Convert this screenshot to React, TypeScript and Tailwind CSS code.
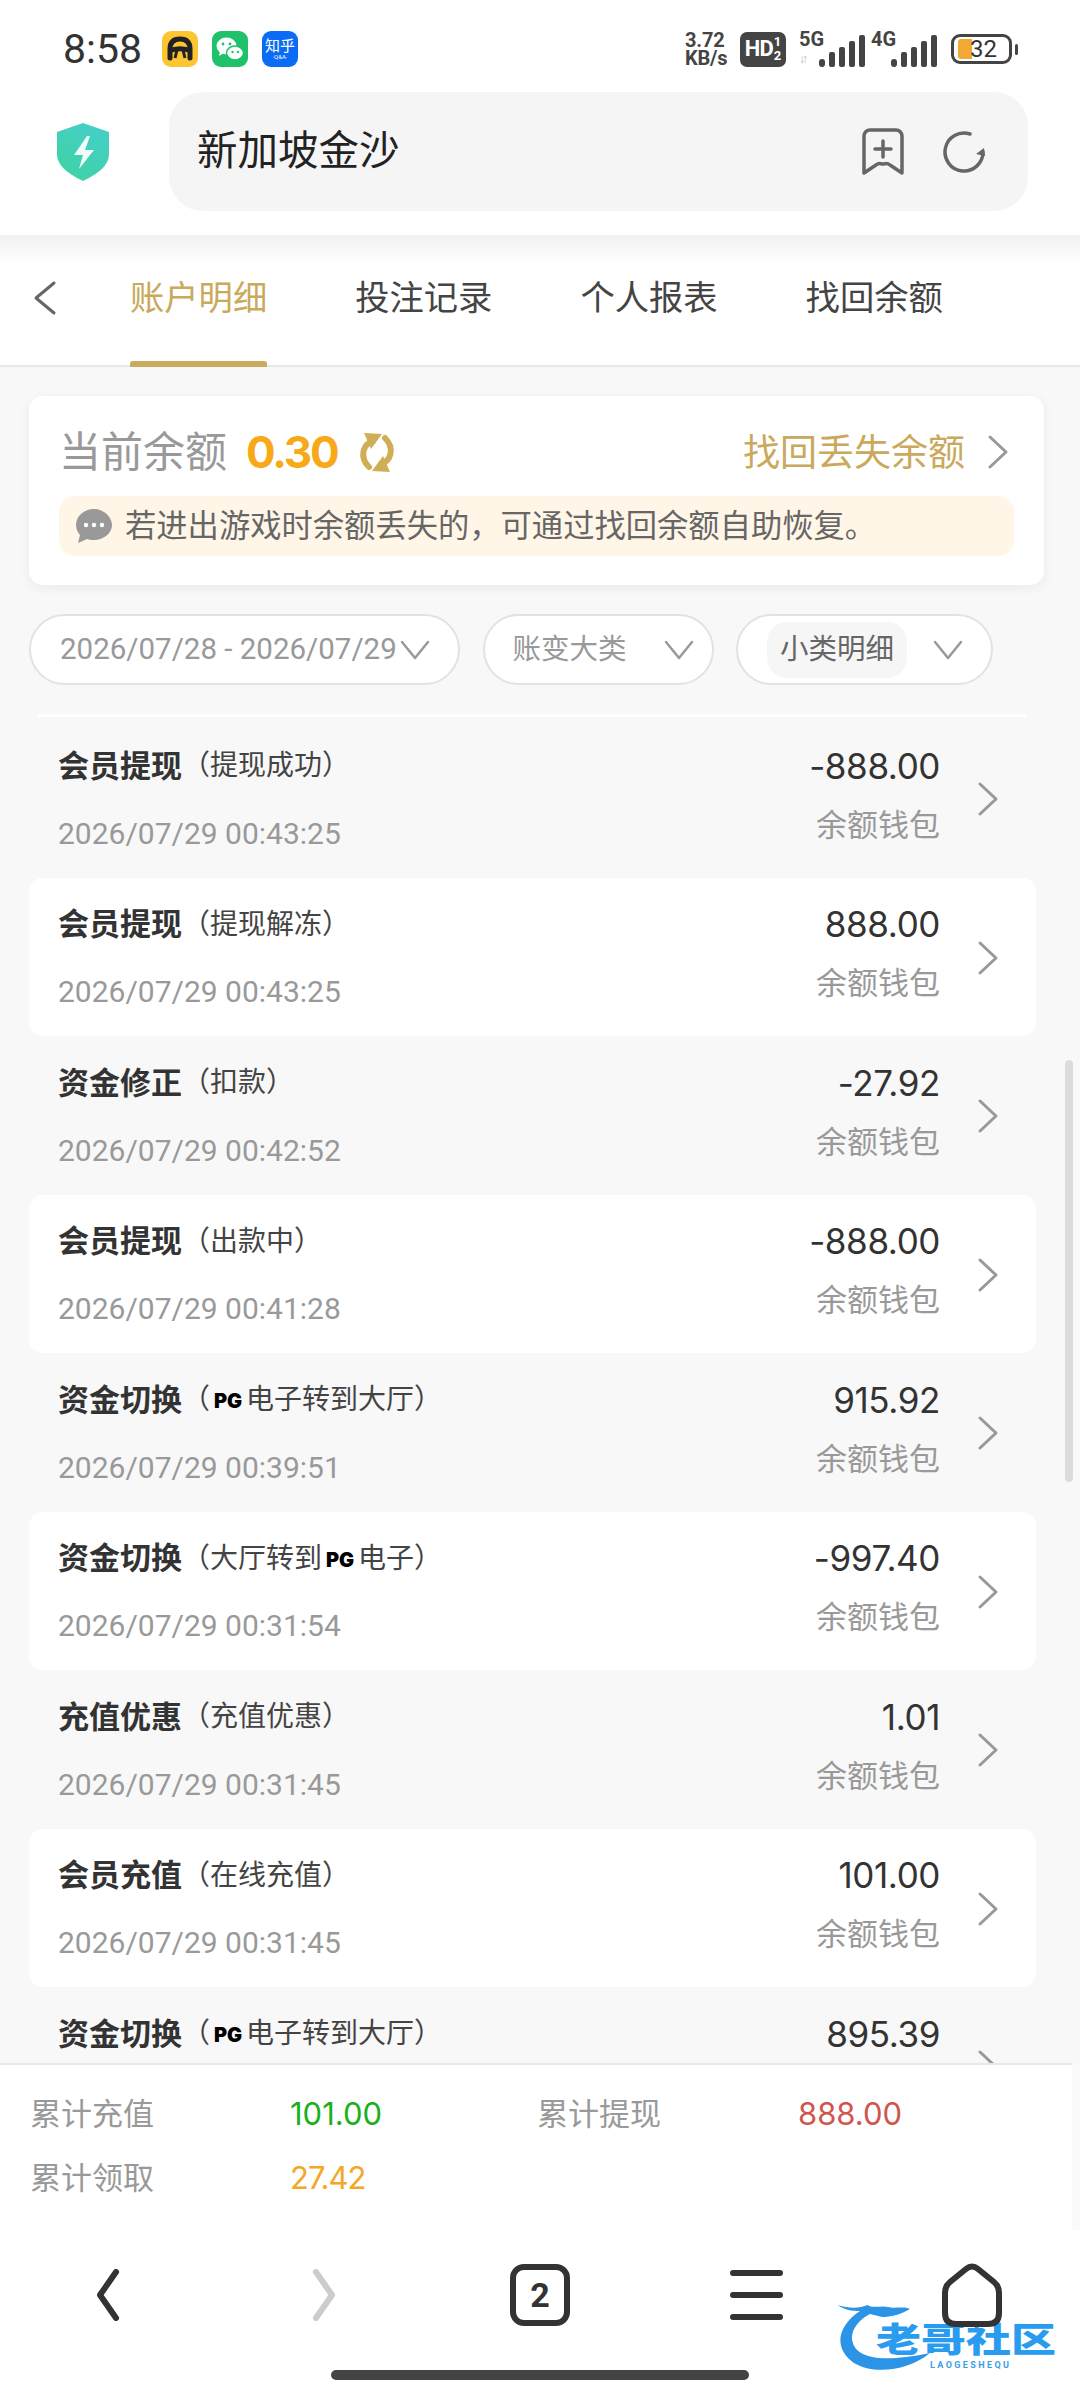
import React from "react";

const rows = [
  { t: "会员提现", s: <>（提现成功）</>, d: "2026/07/29 00:43:25", a: "-888.00" },
  { t: "会员提现", s: <>（提现解冻）</>, d: "2026/07/29 00:43:25", a: "888.00" },
  { t: "资金修正", s: <>（扣款）</>, d: "2026/07/29 00:42:52", a: "-27.92" },
  { t: "会员提现", s: <>（出款中）</>, d: "2026/07/29 00:41:28", a: "-888.00" },
  { t: "资金切换", s: <>（<PG />电子转到大厅）</>, d: "2026/07/29 00:39:51", a: "915.92" },
  { t: "资金切换", s: <>（大厅转到<PG />电子）</>, d: "2026/07/29 00:31:54", a: "-997.40" },
  { t: "充值优惠", s: <>（充值优惠）</>, d: "2026/07/29 00:31:45", a: "1.01" },
  { t: "会员充值", s: <>（在线充值）</>, d: "2026/07/29 00:31:45", a: "101.00" },
  { t: "资金切换", s: <>（<PG />电子转到大厅）</>, d: "", a: "895.39" },
];

function PG() {
  return <span className="inline-block w-[36px] text-center text-[20px] font-black tracking-[0px] text-black align-[1px]">PG</span>;
}

function Chevron({ className, w = 21, h = 34, sw = 3 }: { className?: string; w?: number; h?: number; sw?: number }) {
  return (
    <svg width={w} height={h} viewBox={`0 0 ${w} ${h}`} fill="none" className={className}>
      <path d={`M${sw} ${sw}L${w - sw} ${h / 2}L${sw} ${h - sw}`} stroke="currentColor" strokeWidth={sw} strokeLinecap="round" strokeLinejoin="round" />
    </svg>
  );
}

function Down() {
  return (
    <svg width="30" height="20" viewBox="0 0 30 20" fill="none" className="text-[#999] shrink-0">
      <path d="M2 2L15 18L28 2" stroke="currentColor" strokeWidth="2.5" strokeLinecap="round" strokeLinejoin="round" />
    </svg>
  );
}

function Signal() {
  return (
    <svg width="46" height="32" viewBox="0 0 46 32" fill="#444">
      <rect x="0" y="24" width="6" height="8" rx="3" />
      <rect x="10" y="17" width="6" height="15" rx="2" />
      <rect x="20" y="12" width="6" height="20" rx="2" />
      <rect x="30" y="6" width="6" height="26" rx="2" />
      <rect x="40" y="0" width="6" height="32" rx="2" />
    </svg>
  );
}

function StatusBar() {
  return (
    <div className="h-[92px] shrink-0 flex items-center pl-[63px] pr-[62px] pt-[6px] bg-white">
      <span className="text-[41px] leading-none text-[#333] font-[Roboto,sans-serif] w-[99px]">8:58</span>
      <div className="flex gap-[14px]">
        <div className="w-[36px] h-[36px] rounded-[9px] bg-[#fdc532] flex items-center justify-center">
          <svg width="30" height="30" viewBox="0 0 30 30" fill="none">
            <path d="M5 24V15C5 8 9 5 15 5s10 3 10 10v9" stroke="#222" strokeWidth="5" strokeLinecap="round" />
            <path d="M4 17c6-3 16-3 22 0" stroke="#222" strokeWidth="5" />
            <path d="M12 16l-2 8M18 16l2 8" stroke="#222" strokeWidth="3" />
          </svg>
        </div>
        <div className="w-[36px] h-[36px] rounded-[9px] bg-[#1fc26b] flex items-center justify-center">
          <svg width="30" height="28" viewBox="0 0 30 28" fill="#fff">
            <ellipse cx="11.5" cy="11" rx="10" ry="8.5" />
            <path d="M5 16l-1 5 5-3z" />
            <ellipse cx="20" cy="18" rx="8.5" ry="7" stroke="#1fc26b" strokeWidth="1.5" />
            <circle cx="8" cy="9" r="1.4" fill="#1fc26b" />
            <circle cx="15" cy="9" r="1.4" fill="#1fc26b" />
            <circle cx="17.5" cy="17" r="1.2" fill="#1fc26b" />
            <circle cx="23" cy="17" r="1.2" fill="#1fc26b" />
          </svg>
        </div>
        <div className="w-[36px] h-[36px] rounded-[9px] bg-[#0a6cf5] flex flex-col items-center justify-center text-white">
          <span className="text-[15px] leading-[16px] font-['Noto_Sans_CJK_SC',sans-serif]">知乎</span>
          <span className="text-[6px] leading-[8px] font-[Roboto,sans-serif]">·Q&amp;A·</span>
        </div>
      </div>
      <div className="ml-auto flex items-center text-[#444] font-[Roboto,sans-serif]">
        <div className="flex flex-col items-start text-[20px] leading-[18px] font-bold tracking-[-0.2px] w-[52px]">
          <span>3.72</span>
          <span>KB/s</span>
        </div>
        <div className="ml-[3px] w-[46px] h-[35px] rounded-[7px] bg-[#444] text-white flex items-center justify-center font-bold">
          <span className="text-[22px] leading-none tracking-[-1px]">HD</span>
          <span className="flex flex-col text-[13px] leading-[14px] ml-[1px]"><span>1</span><span>2</span></span>
        </div>
        <div className="ml-[13px] relative w-[66px] h-[36px]">
          <span className="absolute left-0 top-[-3px] text-[20px] font-bold leading-[22px]">5G</span>
          <span className="absolute left-0 bottom-[1px] text-[12px] font-bold leading-[13px] text-[#bbb] tracking-[-3px]">↓↑</span>
          <div className="absolute right-0 bottom-0"><Signal /></div>
        </div>
        <div className="ml-[6px] relative w-[66px] h-[36px]">
          <span className="absolute left-0 top-[-3px] text-[20px] font-bold leading-[22px]">4G</span>
          <div className="absolute right-0 bottom-0"><Signal /></div>
        </div>
        <div className="ml-[14px] w-[61px] h-[30px] rounded-[9px] border-[3px] border-[#444] flex items-center pl-[4px] relative">
          <div className="w-[14px] h-[20px] bg-[#f2a933] rounded-l-[3px]" />
          <span className="absolute left-[16px] top-[2px] text-[24px] leading-[20px] font-normal text-[#333]">32</span>
        </div>
        <div className="ml-[3px] w-[3px] h-[11px] rounded-full bg-[#444]" />
      </div>
    </div>
  );
}

function AddressBar() {
  return (
    <div className="h-[143px] shrink-0 bg-white flex items-start pr-[52px] relative z-10">
      <div className="w-[169px] h-[119px] flex items-center justify-center pr-[4px]">
        <svg width="52" height="58" viewBox="0 0 52 58">
          <defs>
            <linearGradient id="sh" x1="0.8" y1="0" x2="0.3" y2="1">
              <stop offset="0" stopColor="#45cfc8" />
              <stop offset="1" stopColor="#3fd2a6" />
            </linearGradient>
          </defs>
          <path d="M26 0L52 9V31C52 44 38 52 26 58C14 52 0 44 0 31V9Z" fill="url(#sh)" />
          <path d="M30 13L17 32H26L22 46L37 27H28L33 13Z" fill="#fff" opacity="0.92" />
        </svg>
      </div>
      <div className="flex-1 h-[119px] rounded-[34px] bg-[#f5f5f5] flex items-center pl-[28px] pr-[41px]">
        <span className="text-[40.5px] text-[#222]">新加坡金沙</span>
        <div className="ml-auto flex items-center gap-[39px]">
          <svg width="42" height="48" viewBox="0 0 42 48" fill="none" stroke="#666" strokeWidth="3.5" strokeLinecap="round" strokeLinejoin="round">
            <path d="M2 8a6 6 0 0 1 6-6h26a6 6 0 0 1 6 6v37l-12-8a6 6 0 0 0-6-1h-2a6 6 0 0 0-6 1L2 45Z" />
            <path d="M21 13v16M13 21h16" />
          </svg>
          <svg width="44" height="44" viewBox="0 0 44 44" fill="none">
            <path d="M40 22A19 19 0 1 1 27 4" stroke="#666" strokeWidth="3.5" strokeLinecap="round" />
            <path d="M41 18l1 8-9-2z" fill="#666" />
          </svg>
        </div>
      </div>
    </div>
  );
}

function Tabs() {
  return (
    <div className="h-[132px] shrink-0 bg-gradient-to-b from-[#f1f1f1] to-[#ffffff] to-[22%] border-b-2 border-[#e8e8e8] flex relative">
      <div className="w-[130px] flex items-center pl-[33px] pb-[5px] text-[#666]">
        <Chevron className="rotate-180" w={24} h={36} sw={3} />
      </div>
      <div className="flex gap-[88px] text-[34.3px] text-[#444]">
        <div className="relative flex items-center pb-[4px] text-[#c9a95c]">
          账户明细
          <div className="absolute left-0 right-0 bottom-[-2px] h-[6px] rounded-t-[3px] bg-[#c9ab5e]" />
        </div>
        <div className="flex items-center pb-[4px]">投注记录</div>
        <div className="flex items-center pb-[4px]">个人报表</div>
        <div className="flex items-center pb-[4px]">找回余额</div>
      </div>
    </div>
  );
}

function Balance() {
  return (
    <div className="ml-[29px] w-[1015px] h-[189px] shrink-0 rounded-[14px] bg-white shadow-[0_3px_12px_rgba(0,0,0,0.06)] px-[30px] pt-[26px]">
      <div className="flex items-center h-[60px]">
        <span className="text-[42px] leading-none text-[#999]">当前余额</span>
        <span className="ml-[19px] text-[44px] leading-none font-bold text-[#f7a91a] font-[Inter,sans-serif] tracking-[-2.2px]">0.30</span>
        <svg width="42" height="43" viewBox="0 0 42 43" fill="none" className="ml-[19px]">
          <path d="M17 10C7 13 3 26 13 36" stroke="#d0ae55" strokeWidth="6" strokeLinecap="round" />
          <path d="M25 33C35 30 39 17 29 7" stroke="#d0ae55" strokeWidth="6" strokeLinecap="round" />
          <path d="M8 2L26 3L15 18Z" fill="#d0ae55" />
          <path d="M34 41L16 40L27 25Z" fill="#d0ae55" />
        </svg>
        <span className="ml-auto text-[37px] leading-none text-[#c9a95c]">找回丢失余额</span>
        <Chevron className="ml-[22px] mr-[5px] text-[#999]" w={22} h={36} sw={3} />
      </div>
      <div className="mt-[14px] h-[60px] rounded-[16px] bg-[#fff6e8] flex items-center pl-[16px]">
        <svg width="38" height="36" viewBox="0 0 38 36" className="shrink-0">
          <path d="M19 1C9 1 1 8 1 17c0 4 2 8 4 10l-2 8 9-4c2 1 5 1 7 1 10 0 18-7 18-15S29 1 19 1Z" fill="#999" />
          <circle cx="11" cy="17" r="2.2" fill="#fff" />
          <circle cx="19" cy="17" r="2.2" fill="#fff" />
          <circle cx="27" cy="17" r="2.2" fill="#fff" />
        </svg>
        <span className="ml-[12px] pt-[2px] text-[31.3px] leading-none text-[#666] whitespace-nowrap">若进出游戏时余额丢失的，可通过找回余额自助恢复。</span>
      </div>
    </div>
  );
}

function Filters() {
  return (
    <div className="mt-[29px] ml-[29px] flex gap-[22.5px] text-[28.5px] shrink-0">
      <div className="w-[431px] h-[71px] rounded-[36px] bg-white border-2 border-[#e2e2e2] flex items-center pl-[29px] text-[#999] whitespace-nowrap">
        <span className="w-[340px] text-[29.5px] font-[Roboto,sans-serif]">2026/07/28 - 2026/07/29</span>
        <Down />
      </div>
      <div className="w-[231px] h-[71px] rounded-[36px] bg-white border-2 border-[#e2e2e2] flex items-center pl-[28px] text-[#999]">
        账变大类
        <div className="ml-[37px]"><Down /></div>
      </div>
      <div className="w-[257px] h-[71px] rounded-[36px] bg-white border-2 border-[#e2e2e2] flex items-center pl-[29px] text-[#666]">
        <span className="h-[56px] px-[13px] rounded-[20px] bg-[#f6f6f6] flex items-center">小类明细</span>
        <div className="ml-[26px]"><Down /></div>
      </div>
    </div>
  );
}

function Row({ r, card }: { r: (typeof rows)[number]; card: boolean }) {
  return (
    <div className={`h-[158.5px] shrink-0 ml-[29px] w-[1007px] flex items-start relative pl-[29px] rounded-[14px] ${card ? "bg-white" : ""}`}>
      <div className="flex flex-col">
        <div className="mt-[26px] h-[40px] flex items-center whitespace-nowrap">
          <span className="text-[31px] font-bold text-[#333] leading-none">{r.t}</span>
          <span className="text-[28px] text-[#444] leading-none">{r.s}</span>
        </div>
        {r.d && <div className="mt-[28px] h-[40px] flex items-center text-[30px] text-[#999] font-[Roboto,sans-serif]">{r.d}</div>}
      </div>
      <div className="ml-auto mr-[96px] mt-[26px] flex flex-col items-end">
        <div className="h-[42px] flex items-center text-[35px] tracking-[-0.4px] text-[#333]">{r.a}</div>
        {r.d && <div className="mt-[18px] h-[40px] flex items-center text-[31px] text-[#999]">余额钱包</div>}
      </div>
      <div className="absolute left-[948px] top-[62px] text-[#999]">
        <Chevron w={22} h={36} sw={3} />
      </div>
    </div>
  );
}

function Footer() {
  return (
    <div className="h-[167px] shrink-0 bg-white border-t-2 border-[#e8e8e8] pl-[30px] pt-[17px] text-[31px] text-[#999] relative">
      <div className="grid grid-cols-[260px_247px_261px_1fr] h-[64px] items-center">
        <span>累计充值</span>
        <span className="text-[#1ab01a]">101.00</span>
        <span>累计提现</span>
        <span className="text-[#d2554c]">888.00</span>
      </div>
      <div className="grid grid-cols-[260px_247px_261px_1fr] h-[64px] items-center">
        <span>累计领取</span>
        <span className="text-[#f2a826] tracking-[-1px]">27.42</span>
      </div>
      <div className="absolute right-0 top-[-2px] bottom-0 w-[8px] bg-[#fafafa]" />
    </div>
  );
}

function BottomNav() {
  return (
    <div className="h-[170px] shrink-0 bg-white relative">
      <div className="h-[130px] grid grid-cols-5 items-center text-[#333]">
        <svg width="28" height="52" viewBox="0 0 28 52" fill="none" className="justify-self-center">
          <path d="M22 3L6 26L22 49" stroke="#333" strokeWidth="6" strokeLinecap="round" strokeLinejoin="round" />
        </svg>
        <svg width="28" height="52" viewBox="0 0 28 52" fill="none" className="justify-self-center">
          <path d="M6 3L22 26L6 49" stroke="#ccc" strokeWidth="6" strokeLinecap="round" strokeLinejoin="round" />
        </svg>
        <div className="justify-self-center w-[60px] h-[62px] rounded-[14px] border-[6px] border-[#333] flex items-center justify-center text-[34px] font-bold leading-none font-[Roboto,sans-serif]">2</div>
        <div className="justify-self-center flex flex-col gap-[16px]">
          <div className="w-[53px] h-[6px] rounded-full bg-[#333]" />
          <div className="w-[53px] h-[6px] rounded-full bg-[#333]" />
          <div className="w-[53px] h-[6px] rounded-full bg-[#333]" />
        </div>
        <svg width="60" height="64" viewBox="0 0 60 64" fill="none" className="justify-self-center relative z-10">
          <path d="M24 6Q30 1 36 6L52 19Q57 23 57 30V50Q57 61 46 61H14Q3 61 3 50V30Q3 23 8 19Z" stroke="#333" strokeWidth="6" strokeLinecap="round" strokeLinejoin="round" />
        </svg>
      </div>
      <div className="mt-[10px] mx-auto w-[418px] h-[10px] rounded-full bg-[#444]" />
      <div className="absolute left-[838px] top-[73px] w-[224px] h-[70px]">
        <svg width="100" height="70" viewBox="0 0 100 70" fill="none" className="absolute left-0 top-0">
          <path d="M0 2C12 6 22 5 30 2C34 6 44 2 50 4C56 6 66 3 72 6C62 12 52 14 44 14C40 13 36 12 32 11C22 16 13 26 14 36C16 52 34 62 92 50C70 68 36 72 16 60C-4 46 -2 24 22 8C14 8 6 7 0 2Z" fill="#2b94e6" />
        </svg>
        <span className="absolute left-[38px] top-[12px] w-[190px] text-[45px] leading-[50px] font-black text-[#2a9cf0] whitespace-nowrap scale-y-[0.76]">老哥社区</span>
        <span className="absolute left-[92px] top-[57px] text-[9px] leading-[10px] tracking-[2.4px] font-[Roboto,sans-serif] font-bold text-[#3a9ee6] whitespace-nowrap">LAOGESHEQU</span>
      </div>
    </div>
  );
}

export default function App() {
  return (
    <div className="w-[1080px] h-[2400px] flex flex-col overflow-hidden bg-white relative font-['Inter','Noto_Sans_CJK_SC',sans-serif]">
      <StatusBar />
      <AddressBar />
      <Tabs />
      <div className="flex-1 min-h-0 bg-[#f8f8f8] overflow-hidden pt-[29px] flex flex-col relative">
        <Balance />
        <Filters />
        <div className="mt-[29px] ml-[38px] w-[988px] h-[3px] rounded-full bg-white shrink-0" />
        <div className="mt-[2px] flex flex-col">
          {rows.map((r, i) => (
            <Row key={i} r={r} card={i % 2 === 1} />
          ))}
        </div>
        <div className="absolute right-[7px] top-[693px] w-[8px] h-[422px] rounded-full bg-[#dcdcdc]" />
      </div>
      <Footer />
      <BottomNav />
    </div>
  );
}
